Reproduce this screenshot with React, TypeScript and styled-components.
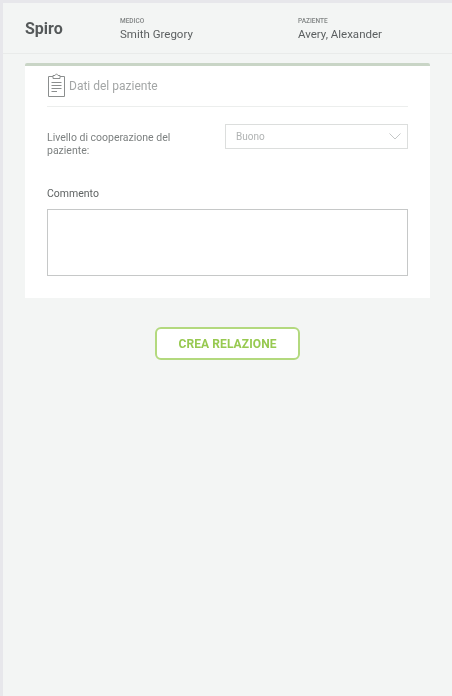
import React from 'react';
import styled, { createGlobalStyle } from 'styled-components';

const GlobalStyle = createGlobalStyle`
  html, body {
    margin: 0;
    padding: 0;
    background-color: #e7e7eb;
  }
  body {
    font-family: Roboto, "Liberation Sans", sans-serif;
  }
`
const Page = styled.div`
  box-sizing: border-box;
  width: 452px;
  height: 696px;
  padding: 3px 0 0 3px;
  overflow: hidden;
`
const Screen = styled.div`
  height: 100%;
  background-color: #f3f5f4;
  filter: blur(0.35px);
`
const Header = styled.header`
  box-sizing: border-box;
  height: 51px;
  display: flex;
  align-items: center;
  padding-left: 22px;
  border-bottom: 1px solid #e9ebea;
`
const Brand = styled.div`
  width: 95px;
  font-size: 16px;
  font-weight: 700;
  color: #55595a;
`
const HeaderField = styled.div<{ $width: number }>`
  width: ${props => props.$width}px;
  display: flex;
  flex-direction: column;
  gap: 1px;
  margin-top: 3px;
`
const FieldCaption = styled.div`
  font-size: 6.5px;
  line-height: 9px;
  font-weight: 500;
  color: #808484;
`
const FieldValue = styled.div`
  font-size: 11.5px;
  line-height: 15px;
  color: #5b5f60;
`
const Card = styled.section`
  box-sizing: border-box;
  width: 405px;
  height: 235px;
  margin: 9px 0 0 22px;
  padding: 0 22px;
  background-color: #fff;
  border-top: 3px solid #c9d5c6;
  border-radius: 2px 2px 0 0;
`
const CardTitle = styled.div`
  height: 40px;
  display: flex;
  align-items: center;
  gap: 3px;
  border-bottom: 1px solid #eceeed;
  font-size: 12px;
  color: #a3a6a6;
  svg {
    width: 19px;
    height: 24px;
    margin-top: -3px;
  }
`
const FormRow = styled.div`
  display: flex;
  justify-content: space-between;
  margin-top: 17px;
`
const RowLabel = styled.div`
  width: 145px;
  padding-top: 7px;
  font-size: 10.5px;
  line-height: 13px;
  color: #7d8181;
`
const SelectBox = styled.div`
  box-sizing: border-box;
  width: 183px;
  height: 25px;
  display: flex;
  align-items: center;
  justify-content: space-between;
  padding: 0 6px 0 10px;
  border: 1.5px solid #dcdedd;
  font-size: 10px;
  color: #b0b3b3;
  svg {
    width: 12px;
    height: 7px;
  }
`
const CommentLabel = styled.div`
  margin-top: 30px;
  font-size: 10.5px;
  line-height: 13px;
  color: #5f6363;
`
const CommentBox = styled.textarea`
  display: block;
  box-sizing: border-box;
  width: 100%;
  height: 67px;
  margin-top: 9px;
  border: 1px solid #c6c8c8;
  border-radius: 0;
  background-color: #fff;
  resize: none;
  outline: none;
`
const Actions = styled.div`
  display: flex;
  justify-content: center;
  margin-top: 29px;
`
const CreateButton = styled.button`
  box-sizing: border-box;
  width: 145px;
  height: 33px;
  padding: 0;
  border: 2px solid #b3d97e;
  border-radius: 6px;
  background-color: #fff;
  font-family: Roboto, "Liberation Sans", sans-serif;
  font-size: 12px;
  font-weight: 700;
  letter-spacing: 0.1px;
  color: #97c950;
`

const ClipboardIcon = () => (
  <svg viewBox="0 0 19 24" fill="none" stroke="#8b8e8e" strokeWidth="1">
    <path d="M6 3.5H1.5V23.5H17.5V3.5H13" />
    <path d="M6 5.5V2.5H8L9.5 .8L11 2.5H13V5.5Z" />
    <path d="M4.5 9.5H14.5M4.5 12.5H14.5M4.5 15.5H14.5M4.5 18.5H10" />
  </svg>
);

const ChevronIcon = () => (
  <svg viewBox="0 0 12 7" fill="none" stroke="#c4c7c7" strokeWidth="1">
    <path d="M.5 .5L6 6L11.5 .5" />
  </svg>
);

const App = () => {
  return (
    <Page>
      <GlobalStyle />
      <Screen>
        <Header>
          <Brand>Spiro</Brand>
          <HeaderField $width={178}>
            <FieldCaption>MEDICO</FieldCaption>
            <FieldValue>Smith Gregory</FieldValue>
          </HeaderField>
          <HeaderField $width={120}>
            <FieldCaption>PAZIENTE</FieldCaption>
            <FieldValue>Avery, Alexander</FieldValue>
          </HeaderField>
        </Header>
        <Card>
          <CardTitle>
            <ClipboardIcon />
            Dati del paziente
          </CardTitle>
          <FormRow>
            <RowLabel>Livello di cooperazione del paziente:</RowLabel>
            <SelectBox>
              Buono
              <ChevronIcon />
            </SelectBox>
          </FormRow>
          <CommentLabel>Commento</CommentLabel>
          <CommentBox />
        </Card>
        <Actions>
          <CreateButton>CREA RELAZIONE</CreateButton>
        </Actions>
      </Screen>
    </Page>
  );
};

export default App;
